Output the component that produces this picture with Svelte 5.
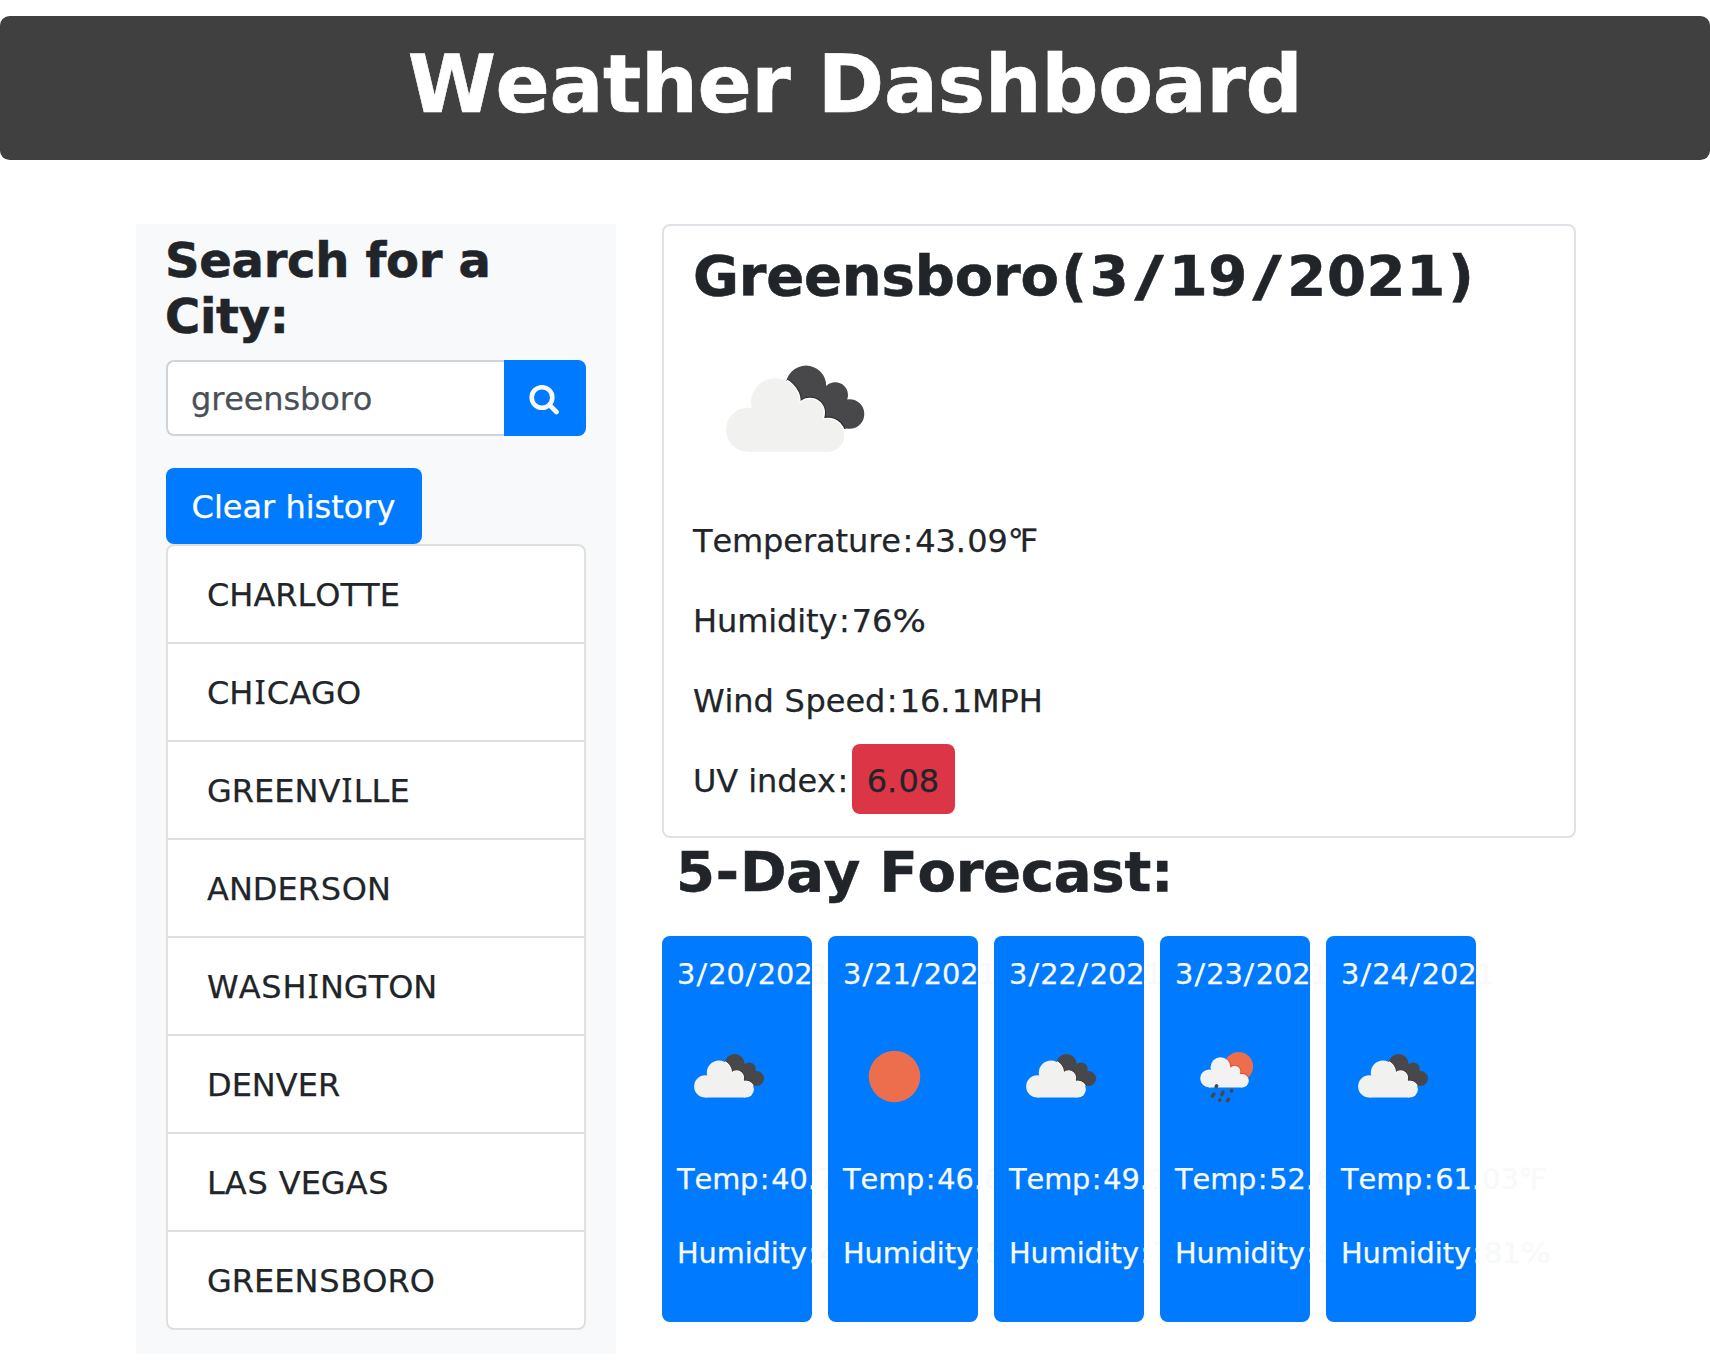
<script>
  const cities = ['CHARLOTTE', 'CHICAGO', 'GREENVILLE', 'ANDERSON', 'WASHINGTON', 'DENVER', 'LAS VEGAS', 'GREENSBORO'];

  const conditions = [
    { label: 'Temperature:', value: '43.09℉' },
    { label: 'Humidity:', value: '76%' },
    { label: 'Wind Speed:', value: '16.1MPH' }
  ];

  const days = [
    { date: '3/20/2021', icon: 'clouds', temp: '40.7', humidity: '4' },
    { date: '3/21/2021', icon: 'sun', temp: '46.6', humidity: '5' },
    { date: '3/22/2021', icon: 'clouds', temp: '49.1', humidity: '7' },
    { date: '3/23/2021', icon: 'rain', temp: '52.6', humidity: '9' },
    { date: '3/24/2021', icon: 'clouds', temp: '61.03', humidity: '81' }
  ];

  // Characters that get extra side bearing
  const wide = { '/': 'slash', ':': 'colon', '.': 'dot', '%': 'percent', I: 'cap-i', S: 'cap-s', '(': 'paren', ')': 'paren', '-': 'dash' };
  const pieces = (text) => text.split(/([/:.%IS()-])/).filter(Boolean);
</script>

{#snippet spaced(text)}{#each pieces(text) as piece}{#if wide[piece]}<span class={wide[piece]}>{piece}</span>{:else}{piece}{/if}{/each}{/snippet}

{#snippet cloudShape()}
  <circle cx="81.3" cy="94.5" r="24.3" />
  <circle cx="54" cy="121.7" r="22" />
  <circle cx="116" cy="104.7" r="13.7" />
  <circle cx="134" cy="127.4" r="16.3" />
  <path d="M54 143.7H134V116L116 96L81 94L54 110Z" />
{/snippet}

{#snippet weatherIcon(kind, size, id)}
  <svg class="weather-icon {size}" viewBox="0 0 200 200" aria-hidden="true">
    {#if kind === 'sun'}
      <circle cx="100" cy="102" r="51" fill="#ec6e4c" />
    {:else if kind === 'rain'}
      <clipPath id={id}><circle cx="124" cy="82" r="28.7" /></clipPath>
      <circle cx="124" cy="82" r="28.7" fill="#ec6e4c" />
      <g clip-path="url(#{id})">
        <g transform="translate(22 6.9) scale(.813)" fill="#e8502f" stroke="#e8502f" stroke-width="5">{@render cloudShape()}</g>
      </g>
      <g transform="translate(22 6.9) scale(.813)" fill="#f2f2f2">{@render cloudShape()}</g>
      <path d="M80.500 120.500l-1 1.500M75 137l-3 4M93 133l-2 5M110 129l0 2M87 148l-.5 1M104 147l-2 3" stroke="#48484a" stroke-width="7" stroke-linecap="round" />
    {:else}
      <clipPath id={id}>
        <circle cx="112" cy="77.8" r="20.2" />
        <circle cx="141.2" cy="87" r="12.8" />
        <circle cx="155.5" cy="106" r="14.8" />
        <path d="M112 60L132 80L148 92L156 120L130 124L90 90Z" />
      </clipPath>
      <g clip-path="url(#{id})">
        <rect width="200" height="200" fill="#48484a" />
        <g fill="#333334" stroke="#333334" stroke-width="5">{@render cloudShape()}</g>
        <g fill="#fff" stroke="#fff" stroke-width="2.6">{@render cloudShape()}</g>
      </g>
      <g fill="#f1f1f0">{@render cloudShape()}</g>
    {/if}
  </svg>
{/snippet}

<header class="banner"><h1>Weather Dashboard</h1></header>

<main class="layout">
  <aside class="sidebar">
    <h2>Search for a City:</h2>
    <div class="search">
      <input type="text" value="greensboro" aria-label="City" />
      <button class="go" aria-label="Search">
        <svg viewBox="0 0 30 30" aria-hidden="true">
          <circle cx="13" cy="12.500" r="10.300" />
          <path d="M21 20.500L27.500 27" />
        </svg>
      </button>
    </div>
    <button class="clear">Clear history</button>
    <ul class="history">
      {#each cities as city}
        <li>{@render spaced(city)}</li>
      {/each}
    </ul>
  </aside>

  <section class="content">
    <article class="current">
      <h2><span class="city">Greensboro</span>{@render spaced('(3/19/2021)')}</h2>
      {@render weatherIcon('clouds', 'large', 'now')}
      {#each conditions as item}
        <p>{@render spaced(item.label + item.value)}</p>
      {/each}
      <p>{@render spaced('UV index:')}<span class="uv">{@render spaced('6.08')}</span></p>
    </article>

    <h2 class="forecast-title">{@render spaced('5-Day Forecast:')}</h2>
    <div class="forecast">
      {#each days as day, i}
        <article class="day">
          <p>{@render spaced(day.date)}</p>
          {@render weatherIcon(day.icon, 'small', `day-${i}`)}
          <p>{@render spaced(`Temp:${day.temp}${i === 4 ? '℉' : ''}`)}</p>
          <p>{@render spaced(`Humidity:${day.humidity}${i === 4 ? '%' : ''}`)}</p>
        </article>
      {/each}
    </div>
  </section>
</main>

<style>
  :global(body) {
    margin: 0;
    background: #fff;
    color: #212529;
    font: 32px/48px Verdana, 'DejaVu Sans', sans-serif;
    font-kerning: none;
    -webkit-text-stroke-width: .25px;
  }
  :global(*) { box-sizing: border-box; }
  h1, h2, p, ul { margin: 0; padding: 0; }
  h1, h2 { font-weight: 700; -webkit-text-stroke-width: .6px; }

  .slash { display: inline-block; margin: 0 .0585em; transform: scaleX(1.15); -webkit-text-stroke-width: 0; }
  .colon { padding: 0 .067em 0 .05em; }
  .dot { padding: 0 .046em 0 0; }
  .percent { display: inline-block; margin: 0 .063em; transform: scaleX(1.1); }
  .cap-i { padding: 0 .041em; font-family: Verdana, 'Noto Sans', sans-serif; line-height: 1; }
  .cap-s { padding: 0 .024em; }
  h2 .slash { margin: 0 .162em; transform: scaleX(1.45); -webkit-text-stroke-width: .3px; }
  h2 .paren { padding: 0 .043em; }
  h2 .dash { padding: 0 .02em; }
  h2 .colon { padding: 0; }

  .banner {
    height: 144px;
    margin: 16px 0 64px;
    padding-top: 21px;
    border-radius: 9.6px;
    background: #404040;
    color: #fff;
    text-align: center;
  }
  .banner h1 { font-size: 80px; line-height: 96px; letter-spacing: -.0048em; }

  .layout { display: flex; align-items: flex-start; gap: 46px; padding-left: 136px; }
  .sidebar { width: 480px; height: 1130px; padding: 8px 30px 24px; background: #f8f9fa; }
  .sidebar h2 { margin: 0 0 16px -1px; font-size: 48px; line-height: 56px; letter-spacing: -.006em; }
  .search { display: flex; height: 76px; margin-bottom: 32px; }
  input {
    width: 338px;
    padding: 2px 23px 0;
    border: 2px solid #ced4da;
    border-right: 0;
    border-radius: 8px 0 0 8px;
    background: #fff;
    color: #495057;
    font: inherit;
    letter-spacing: -.004em;
  }
  button { border: 0; background: #007bff; color: #fff; font: inherit; }
  .go { display: grid; place-items: center; width: 82px; padding: 3px 3px 0 0; border-radius: 0 8px 8px 0; }
  .go svg { width: 30px; height: 30px; fill: none; stroke: #f8f9fa; stroke-width: 4.6; stroke-linecap: round; }
  .clear { display: block; width: 256px; height: 76px; padding: 2px 1px 0 0; border-radius: 8px; }
  .history { list-style: none; border: 2px solid #dfdfdf; border-radius: 8px; background: #fff; }
  .history li { height: 98px; padding: 25px 39px 23px; border-bottom: 2px solid #dfdfdf; }
  .history li:last-child { height: 96px; border-bottom: 0; }

  .content { width: 914px; }
  .current {
    height: 614px;
    padding: 15px 29px 0;
    border: 2px solid #dee2e6;
    border-radius: 8px;
  }
  .current h2 { height: 67px; padding-top: 1px; font-size: 56px; line-height: 67px; white-space: nowrap; letter-spacing: .012em; }
  .city { letter-spacing: -.003em; }
  .current p { height: 48px; margin-bottom: 32px; padding-top: 1px; white-space: nowrap; letter-spacing: -.003em; }
  .uv { margin-left: 1.5px; padding: 18px 16px 14px 15px; border-radius: 8px; background: #dc3545; }
  .weather-icon { display: block; }
  .large { width: 200px; height: 200px; margin: 0 0 8px 1px; }
  /* pulls the icon slightly into the gap left by the date line */
  .small { width: 101px; height: 101px; margin: -2px 0 32px 1px; }

  .forecast-title { height: 98px; padding: 0 0 0 14px; font-size: 56px; line-height: 67px; letter-spacing: -.004em; }
  .forecast { display: flex; gap: 16px; }
  .day {
    width: 150px;
    height: 386px;
    padding: 17px 15px 15px;
    border-radius: 8px;
    background: #007bff;
    color: #f8f9fa;
    font-size: 28.8px;
    line-height: 43px;
    white-space: nowrap;
    letter-spacing: -.003em;
    position: relative;
  }
  .day p { height: 43px; margin-bottom: 31px; }
</style>
